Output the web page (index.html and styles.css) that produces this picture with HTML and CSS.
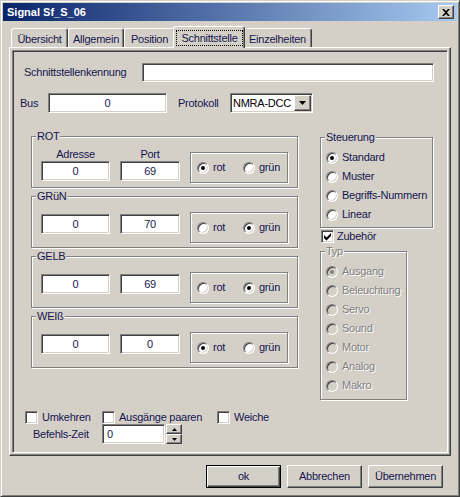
FILE: index.html
```html
<!DOCTYPE html>
<html lang="de">
<head>
    <meta charset="UTF-8">
    <title>Signal Sf_S_06</title>
    <link rel="stylesheet" href="styles.css">
</head>
<body>
<div class="window">
    <div class="titlebar">
        <span class="title">Signal Sf_S_06</span>
        <span class="close-btn">
            <svg width="8" height="7" viewBox="0 0 8 7"><path d="M0 0h2l2 2 2-2h2l-3 3.5 3 3.5h-2l-2-2-2 2h-2l3-3.5z" fill="#000"/></svg>
        </span>
    </div>

    <div class="tabs">
        <div class="tab t1">Übersicht</div>
        <div class="tab t2">Allgemein</div>
        <div class="tab t3">Position</div>
        <div class="tab active"><span class="focus">Schnittstelle</span></div>
        <div class="tab t5">Einzelheiten</div>
    </div>

    <div class="tabpanel">
        <div class="page">
            <div class="row row-id">
                <span class="lbl lbl-id">Schnittstellenkennung</span>
                <div class="edit edit-id"></div>
            </div>

            <div class="row row-bus">
                <span class="lbl lbl-bus">Bus</span>
                <div class="edit center edit-bus">0</div>
                <span class="lbl lbl-proto">Protokoll</span>
                <div class="select">
                    <span class="select-text">NMRA-DCC</span>
                    <span class="drop-btn">
                        <svg width="7" height="4" viewBox="0 0 7 4"><path d="M0 0h7l-3.5 4z" fill="#000"/></svg>
                    </span>
                </div>
            </div>

            <div class="main">
                <div class="col-left">
                    <div class="group sig">
                        <span class="legend">ROT</span>
                        <div class="sig-row labeled">
                            <div class="field addr"><span class="field-lbl">Adresse</span><div class="edit center">0</div></div>
                            <div class="field port"><span class="field-lbl">Port</span><div class="edit center">69</div></div>
                            <div class="radio-box">
                                <span class="opt"><span class="radio on"></span>rot</span>
                                <span class="opt"><span class="radio"></span>grün</span>
                            </div>
                        </div>
                    </div>

                    <div class="group sig">
                        <span class="legend">GRüN</span>
                        <div class="sig-row">
                            <div class="field addr"><div class="edit center">0</div></div>
                            <div class="field port"><div class="edit center">70</div></div>
                            <div class="radio-box">
                                <span class="opt"><span class="radio"></span>rot</span>
                                <span class="opt"><span class="radio on"></span>grün</span>
                            </div>
                        </div>
                    </div>

                    <div class="group sig">
                        <span class="legend">GELB</span>
                        <div class="sig-row">
                            <div class="field addr"><div class="edit center">0</div></div>
                            <div class="field port"><div class="edit center">69</div></div>
                            <div class="radio-box">
                                <span class="opt"><span class="radio"></span>rot</span>
                                <span class="opt"><span class="radio on"></span>grün</span>
                            </div>
                        </div>
                    </div>

                    <div class="group sig">
                        <span class="legend">WEIß</span>
                        <div class="sig-row">
                            <div class="field addr"><div class="edit center">0</div></div>
                            <div class="field port"><div class="edit center">0</div></div>
                            <div class="radio-box">
                                <span class="opt"><span class="radio on"></span>rot</span>
                                <span class="opt"><span class="radio"></span>grün</span>
                            </div>
                        </div>
                    </div>
                </div>

                <div class="col-right">
                    <div class="group steuerung">
                        <span class="legend">Steuerung</span>
                        <div class="opts">
                            <span class="opt-row"><span class="radio on"></span>Standard</span>
                            <span class="opt-row"><span class="radio"></span>Muster</span>
                            <span class="opt-row"><span class="radio"></span>Begriffs-Nummern</span>
                            <span class="opt-row"><span class="radio"></span>Linear</span>
                        </div>
                    </div>

                    <span class="chk zubehoer">
                        <span class="check">
                            <svg width="11" height="11" viewBox="0 0 11 11"><path d="M2 4l2.5 2.5L9 2v3l-4.5 4.5L2 7z" fill="#000"/></svg>
                        </span>Zubehör
                    </span>

                    <div class="group typ disabled">
                        <span class="legend">Typ</span>
                        <div class="opts">
                            <span class="opt-row"><span class="radio on"></span>Ausgang</span>
                            <span class="opt-row"><span class="radio"></span>Beleuchtung</span>
                            <span class="opt-row"><span class="radio"></span>Servo</span>
                            <span class="opt-row"><span class="radio"></span>Sound</span>
                            <span class="opt-row"><span class="radio"></span>Motor</span>
                            <span class="opt-row"><span class="radio"></span>Analog</span>
                            <span class="opt-row"><span class="radio"></span>Makro</span>
                        </div>
                    </div>
                </div>
            </div>

            <div class="row checks">
                <span class="chk c1"><span class="check"></span>Umkehren</span>
                <span class="chk c2"><span class="check"></span>Ausgänge paaren</span>
                <span class="chk"><span class="check"></span>Weiche</span>
            </div>

            <div class="row befehl">
                <span class="lbl lbl-befehl">Befehls-Zeit</span>
                <div class="edit spin-edit">0</div>
                <div class="spin">
                    <span class="spin-btn"><svg width="5" height="3" viewBox="0 0 5 3"><path d="M2.5 0L5 3H0z" fill="#000"/></svg></span>
                    <span class="spin-btn"><svg width="5" height="3" viewBox="0 0 5 3"><path d="M0 0h5L2.5 3z" fill="#000"/></svg></span>
                </div>
            </div>
        </div>
    </div>

    <div class="buttons">
        <div class="btn default">ok</div>
        <div class="btn">Abbrechen</div>
        <div class="btn">Übernehmen</div>
    </div>
</div>
</body>
</html>
```

FILE: styles.css
```css
* {
    box-sizing: border-box;
}
html, body {
    margin: 0;
    padding: 0;
}
body {
    background: #d4d0c8;
    font-family: "Liberation Sans", Arial, sans-serif;
    font-size: 11px;
    line-height: 13px;
    letter-spacing: -0.25px;
    color: #161650;
}

/* window frame */
.window {
    width: 460px;
    height: 497px;
    padding: 2px;
    background: #d4d0c8;
    border: 1px solid;
    border-color: #d4d0c8 #404040 #404040 #d4d0c8;
    box-shadow: inset 1px 1px #fff, inset -1px -1px #808080;
}
.titlebar {
    height: 18px;
    display: flex;
    align-items: center;
    background: linear-gradient(to right, #0a246a, #a6caf0);
}
.title {
    color: #fff;
    font-weight: bold;
    letter-spacing: 0;
    padding-left: 4px;
}
.close-btn {
    margin-left: auto;
    margin-right: 3px;
    width: 16px;
    height: 14px;
    display: flex;
    align-items: center;
    justify-content: center;
    background: #d4d0c8;
    border: 1px solid;
    border-color: #fff #404040 #404040 #fff;
    box-shadow: inset -1px -1px #808080;
}

/* tabs */
.tabs {
    display: flex;
    align-items: flex-end;
    height: 21px;
    margin-top: 5px;
    padding-left: 8px;
}
.tab {
    height: 19px;
    padding-top: 4px;
    text-align: center;
    white-space: nowrap;
    background: #d4d0c8;
    border: 1px solid;
    border-bottom: none;
    border-color: #fff #404040 #fff #fff;
    border-radius: 3px 3px 0 0;
    box-shadow: inset -1px 0 #808080;
}
.t1 { width: 57px; }
.t2 { width: 56px; }
.t3 { width: 51px; }
.t5 { width: 69px; }
.tab.active {
    position: relative;
    z-index: 1;
    width: 72px;
    height: 22px;
    margin: 0 -2px -1px;
    padding: 3px 1px 0 2px;
}
.focus {
    display: block;
    height: 16px;
    padding-top: 2px;
    outline: 1px dotted #000;
    outline-offset: -1px;
}

.tabpanel {
    margin-left: 6px;
    width: 442px;
    height: 409px;
    padding: 2px;
    border: 1px solid;
    border-color: #fff #404040 #404040 #fff;
    box-shadow: inset -1px -1px #808080;
}
.page {
    height: 100%;
    border: 1px solid;
    border-color: #808080 #fff #fff #808080;
    box-shadow: inset 1px 1px #404040, inset -1px -1px #d4d0c8;
}

/* common controls */
.row {
    display: flex;
    align-items: center;
}
.lbl {
    white-space: nowrap;
}
.edit {
    height: 20px;
    background: #fff;
    border: 1px solid;
    border-color: #808080 #fff #fff #808080;
    box-shadow: inset 1px 1px #404040, inset -1px -1px #d4d0c8;
    display: flex;
    align-items: center;
}
.edit.center {
    justify-content: center;
}
.drop-btn,
.spin-btn,
.btn {
    background: #d4d0c8;
    border: 1px solid;
    border-color: #fff #404040 #404040 #fff;
    box-shadow: inset -1px -1px #808080;
    display: flex;
    align-items: center;
    justify-content: center;
}

/* top rows */
.row-id {
    margin-top: 12px;
}
.lbl-id {
    width: 129px;
    padding-left: 11px;
}
.edit-id {
    width: 292px;
    height: 19px;
}
.row-bus {
    margin-top: 11px;
}
.lbl-bus {
    width: 35px;
    padding-left: 7px;
}
.edit-bus {
    width: 119px;
}
.lbl-proto {
    width: 52px;
    margin-left: 11px;
}
.select {
    width: 83px;
    height: 20px;
    padding: 2px;
    display: flex;
    align-items: center;
    background: #fff;
    border: 1px solid;
    border-color: #808080 #fff #fff #808080;
    box-shadow: inset 1px 1px #404040, inset -1px -1px #d4d0c8;
}
.select-text {
    flex: 1;
    color: #000;
}
.drop-btn {
    width: 17px;
    height: 16px;
    margin-right: -1px;
}

/* group boxes */
.main {
    display: flex;
    margin-top: 23px;
}
.group {
    border: 1px solid #808080;
    box-shadow: inset 1px 1px #fff, 1px 1px #fff;
}
.legend {
    display: table;
    margin: -7px 0 0 4px;
    padding: 0 1px;
    background: #d4d0c8;
}
.col-left {
    width: 267px;
    margin-left: 18px;
}
.sig {
    height: 52px;
    margin-bottom: 8px;
}
.sig-row {
    display: flex;
    align-items: flex-start;
    padding-left: 9px;
}
.field {
    margin-top: 11px;
}
.sig-row.labeled .field {
    margin-top: 5px;
}
.field-lbl {
    display: block;
    text-align: center;
}
.addr { width: 69px; }
.port { width: 60px; margin-left: 10px; }
.radio-box {
    width: 98px;
    height: 31px;
    margin: 9px 0 0 10px;
    padding-left: 6px;
    display: flex;
    align-items: center;
    border: 1px solid #808080;
    box-shadow: inset 1px 1px #fff, 1px 1px #fff;
}
.opt {
    display: flex;
    align-items: center;
    gap: 4px;
}
.opt:first-child {
    width: 46px;
}

/* radios and checkboxes */
.radio {
    width: 12px;
    height: 12px;
    flex: none;
    border-radius: 50%;
    background: #fff;
    border: 1px solid;
    border-color: #808080 #fff #fff #808080;
    box-shadow: inset 1px 1px #404040, inset -1px -1px #d4d0c8;
    display: flex;
    align-items: center;
    justify-content: center;
}
.radio.on::after {
    content: "";
    width: 4px;
    height: 4px;
    border-radius: 50%;
    background: #000;
}
.check {
    width: 13px;
    height: 13px;
    flex: none;
    background: #fff;
    border: 1px solid;
    border-color: #808080 #fff #fff #808080;
    box-shadow: inset 1px 1px #404040, inset -1px -1px #d4d0c8;
}
.check svg {
    display: block;
}
.chk {
    display: flex;
    align-items: center;
    gap: 4px;
}

/* right column */
.col-right {
    width: 114px;
    margin-left: 22px;
    padding-top: 1px;
}
.steuerung {
    width: 113px;
    height: 91px;
}
.opts {
    margin-top: 4px;
}
.opt-row {
    height: 19px;
    padding-left: 5px;
    display: flex;
    align-items: center;
    gap: 4px;
    white-space: nowrap;
}
.zubehoer {
    height: 15px;
    margin: 1px 0 0 1px;
    gap: 3px;
}
.typ {
    width: 87px;
    height: 149px;
    margin-top: 7px;
}
.disabled .legend,
.disabled .opt-row {
    color: #808080;
    text-shadow: 1px 1px 0 #fff;
}
.disabled .radio {
    background: #d4d0c8;
}
.disabled .radio.on::after {
    background: #808080;
}

/* bottom rows */
.checks {
    height: 13px;
    margin-top: 11px;
    padding-left: 12px;
}
.c1 { width: 77px; }
.c2 { width: 115px; }
.befehl {
    height: 20px;
}
.lbl-befehl {
    width: 89px;
    padding-left: 20px;
}
.spin-edit {
    width: 63px;
    padding-left: 4px;
}
.spin {
    margin-left: 1px;
    display: flex;
    flex-direction: column;
}
.spin-btn {
    width: 16px;
    height: 10px;
}

/* dialog buttons */
.buttons {
    display: flex;
    justify-content: flex-end;
    gap: 6px;
    margin-top: 9px;
    padding-right: 14px;
}
.btn {
    width: 75px;
    height: 23px;
}
.btn.default {
    border-color: #000;
    box-shadow: inset 1px 1px #fff, inset -1px -1px #404040, inset -2px -2px #808080;
}
```
